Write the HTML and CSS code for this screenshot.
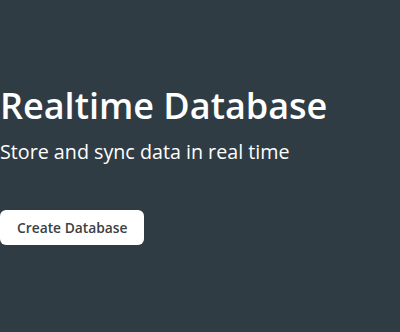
FILE: index.html
```html
<!DOCTYPE html>
<html lang="en">
<head>
    <meta charset="UTF-8">
    <meta name="viewport" content="width=device-width, initial-scale=1.0">
    <title>Realtime Database</title>
    <link rel="stylesheet" href="styles.css">
</head>
<body>
<div class="hero">
    <h1 class="hero-title">Realtime Database</h1>
    <p class="hero-sub">Store and sync data in real time</p>
    <button class="hero-btn">Create Database</button>
</div>
</body>
</html>
```

FILE: styles.css
```css
body {
    margin: 0;
    padding: 0;
    background: #2f3c44;
    font-family: 'Open Sans', 'Liberation Sans', sans-serif;
    min-height: 100vh;
}
.hero {
    padding-top: 82px;
    color: white;
}
.hero-title {
    margin: 0;
    font-size: 36px;
    font-weight: 600;
    line-height: 48px;
}
.hero-sub {
    margin: 9px 0 0;
    font-size: 19.7px;
    font-weight: 500;
    line-height: 26px;
}
.hero-btn {
    display: block;
    margin-top: 45px;
    height: 35px;
    padding: 0 17px;
    font-family: inherit;
    font-size: 13.8px;
    font-weight: 600;
    color: #3c4043;
    background: white;
    border: none;
    border-radius: 6px;
}
```
